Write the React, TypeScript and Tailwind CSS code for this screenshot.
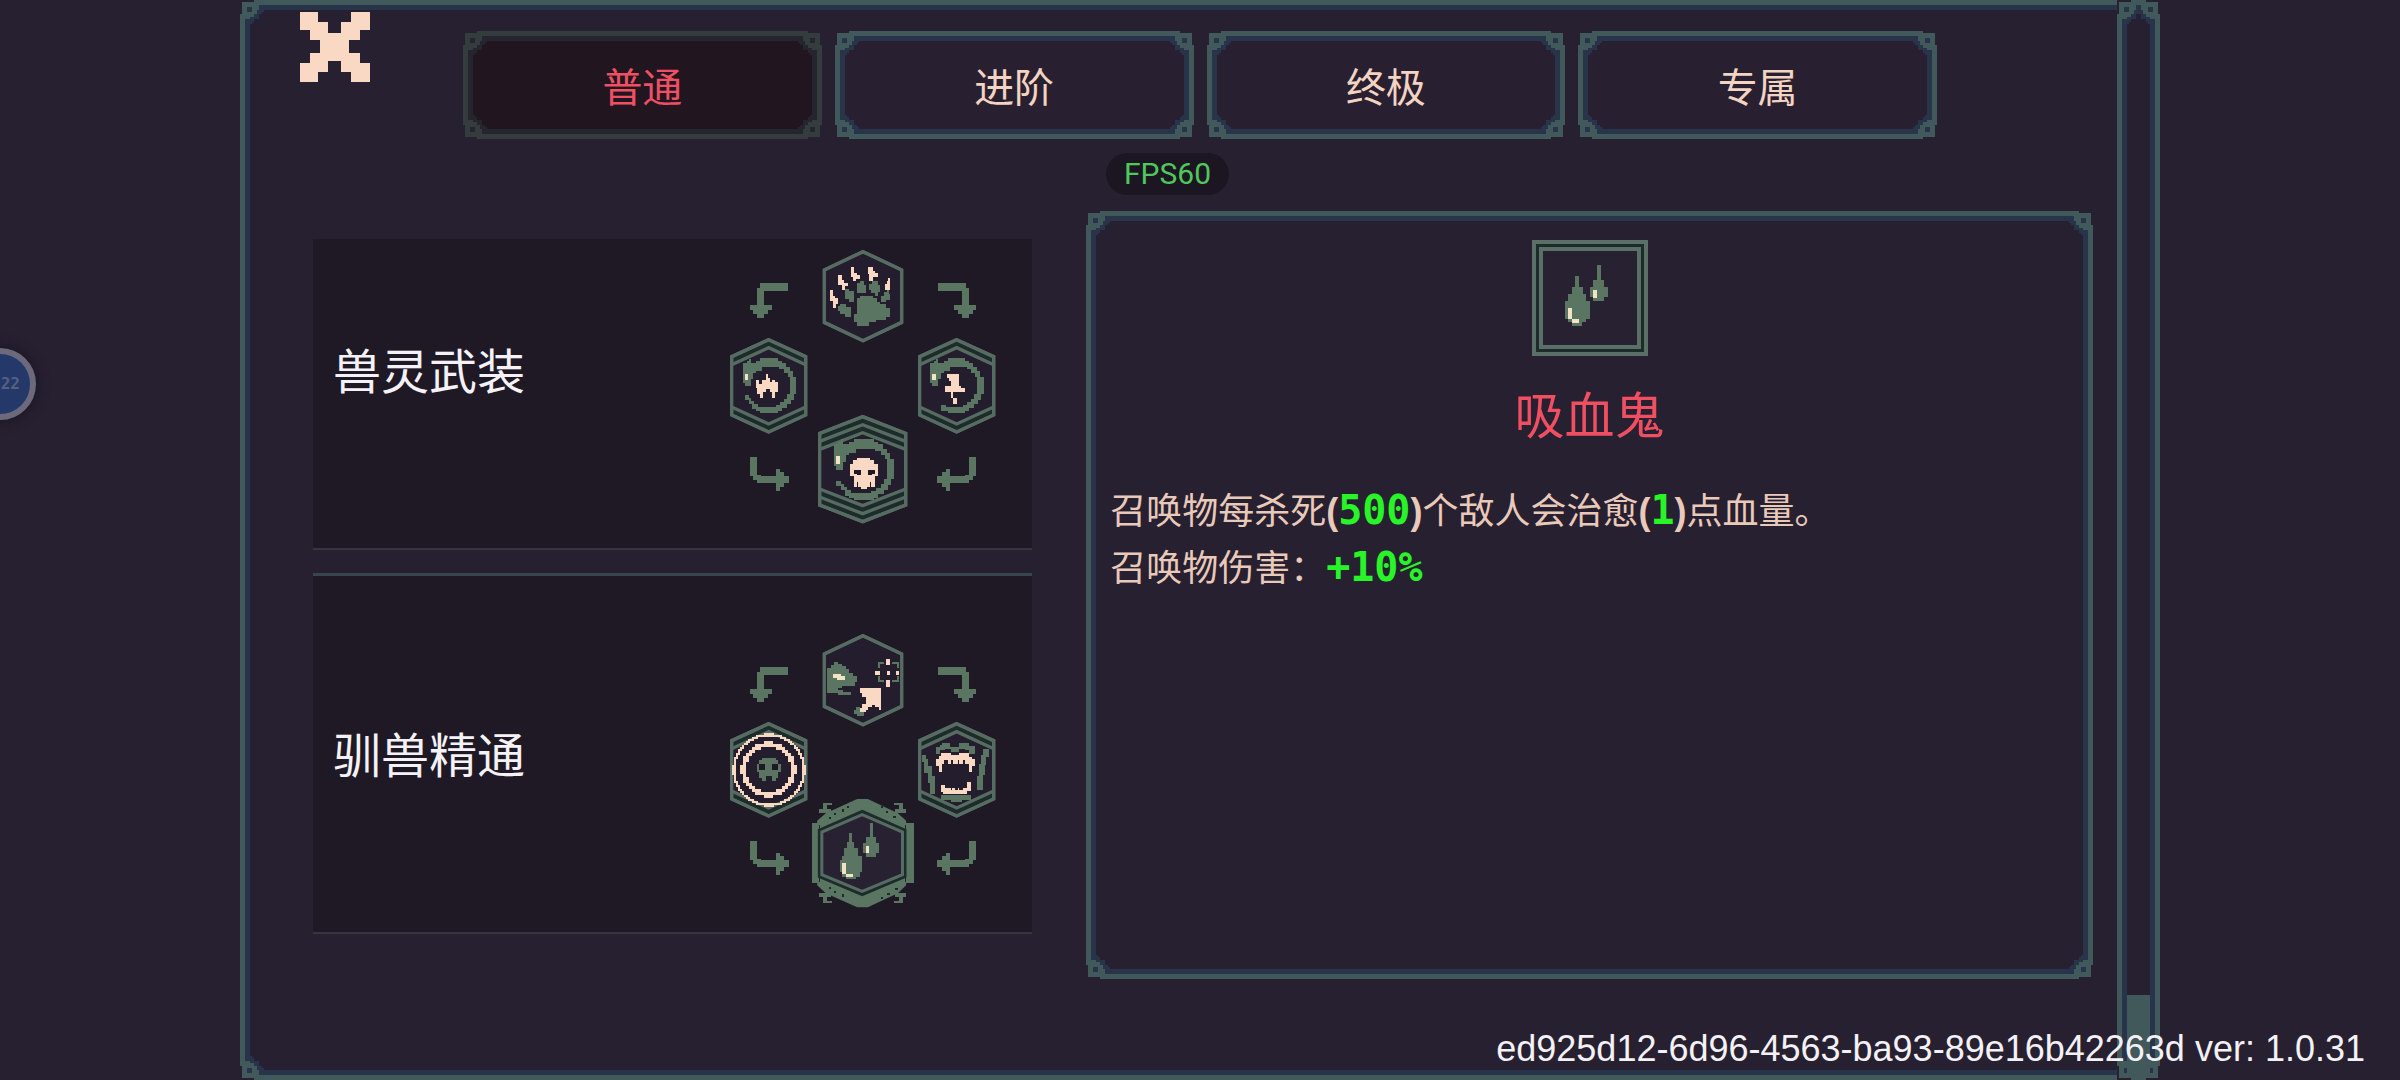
import { useState } from "react";
import type { ReactNode } from "react";

const GREEN = "#5a7561";
const EDGE = "#566b62";
const GROOVE = "#1d2b2b";
const PEACH = "#fad9c4";
const CREAM = "#f1e4c4";
const DARK = "#1f1926";

type Tone = { line: string; shade: string };
const NORMAL: Tone = { line: "#41595a", shade: "#28344a" };
const MUTED: Tone = { line: "#343c3d", shade: "#24252f" };

const CORNER_SPOTS = [
  "left-0 top-0",
  "right-0 top-0 -scale-x-100",
  "left-0 bottom-0 -scale-y-100",
  "right-0 bottom-0 -scale-100",
];

function Corner({ tone, spot }: { tone: Tone; spot: string }) {
  return (
    <svg className={`absolute h-6 w-6 ${spot}`} viewBox="0 0 10 10" shapeRendering="crispEdges" aria-hidden="true">
      <path fill="#272030" d="M0 0H6V1H1V6H0Z" />
      <path fill={tone.shade} d="M7 2H10V5H9V6H8V8H6V9H5V10H2V7Z" />
      <path fill={tone.line} d="M6 0H10V2H8V4H7V6H6V7H4V8H2V10H0V6H1V1H6Z" />
      <path fill={tone.shade} d="M3 3H5V5H3Z" />
    </svg>
  );
}

/* Decorative double border with riveted corners, laid over its parent. */
function Trim({ tone = NORMAL }: { tone?: Tone }) {
  const muted = tone === MUTED;
  return (
    <div aria-hidden="true" className="pointer-events-none absolute inset-0">
      <div className={`absolute inset-0 border-[5px] ${muted ? "border-[#343c3d]" : "border-[#41595a]"}`}>
        <div className={`h-full w-full border-[5px] ${muted ? "border-[#24252f]" : "border-[#28344a]"}`} />
      </div>
      {CORNER_SPOTS.map((s) => (
        <Corner key={s} tone={tone} spot={s} />
      ))}
    </div>
  );
}

/* ---------- hexagon outlines ---------- */

function Hex({ x, y, w, h, shoulder, ridges }: { x: number; y: number; w: number; h: number; shoulder: number; ridges: number }) {
  const l = x + 5;
  const r = x + w - 5;
  const c = x + w / 2;
  const t = y + 5;
  const b = y + h - 5;
  const top = y + shoulder;
  const bot = y + h - shoulder;
  const depth = ridges * 24;
  const steps = Array.from({ length: ridges }, (_, i) => (i + 1) * 24);
  return (
    <g strokeWidth="10" stroke={EDGE} fill="none">
      <path fill={ridges ? GROOVE : "#241d2d"} d={`M${c} ${t}L${r} ${top}V${bot}L${c} ${b}L${l} ${bot}V${top}Z`} />
      {ridges > 0 && (
        <path
          stroke="none"
          fill="#241d2d"
          d={`M${c} ${t + depth}L${r} ${top + depth}V${bot - depth}L${c} ${b - depth}L${l} ${bot - depth}V${top + depth}Z`}
        />
      )}
      {steps.map((d) => (
        <path key={d} d={`M${l} ${top + d}L${c} ${t + d}L${r} ${top + d}M${l} ${bot - d}L${c} ${b - d}L${r} ${bot - d}`} />
      ))}
      <path d={`M${c} ${t}L${r} ${top}V${bot}L${c} ${b}L${l} ${bot}V${top}Z`} />
    </g>
  );
}

/* Cells of a blocky circle outline. */
function ring(cx: number, cy: number, inner: number, outer: number, cell: number) {
  const n = Math.ceil(outer / cell) + 1;
  let d = "";
  for (let i = -n; i <= n; i++) {
    for (let j = -n; j <= n; j++) {
      const dist = Math.hypot(i * cell, j * cell);
      if (dist >= inner && dist < outer) {
        d += `M${cx + i * cell - cell / 2} ${cy + j * cell - cell / 2}h${cell}v${cell}h${-cell}z`;
      }
    }
  }
  return d;
}

const SERPENT =
  "M126 400H138V394H144V388H150V400H167V394H179V386H232V394H244V400H256V412H268V424H276V441H287V493H279V510H270V522H258V534H244V543H232V549H179V543H167V537H155V522H144V512H132V497H144V505H152V513H161V522H173V531H226V525H238V516H250V507H258V493H268V441H261V430H250V418H236V412H185V424H167V430H158V447H150V468H132V459H126Z";
const SERPENT_SHORT =
  "M126 400H138V394H144V388H150V400H167V394H179V386H232V394H244V400H256V412H268V424H276V441H287V493H279V510H270V522H258V534H244V543H232V549H179V543H159V525H173V531H226V525H238V516H250V507H258V493H268V441H261V430H250V418H236V412H185V424H167V430H158V447H150V468H132V459H126Z";

function Serpent({ d = SERPENT }: { d?: string }) {
  return (
    <>
      <path fill={GREEN} d={d} />
      <path fill={CREAM} d="M132 432h11v20h-11z" />
    </>
  );
}

function Art({ box, className, children }: { box: string; className: string; children: ReactNode }) {
  return (
    <svg viewBox={box} className={className} aria-hidden="true">
      {children}
    </svg>
  );
}

const Crisp = ({ children, transform }: { children: ReactNode; transform?: string }) => (
  <g shapeRendering="crispEdges" transform={transform}>
    {children}
  </g>
);

/* ---------- skill icons ---------- */

function Paw() {
  return (
    <Art box="365 60 243 279" className="h-[93px] w-[81px]">
      <Hex x={365} y={60} w={243} h={277} shoulder={60} ridges={0} />
      <Crisp>
        <path
          fill={PEACH}
          d="M388 181H396V197H402V205H412V222H405V235H396V214H388ZM412 134H424V150H430V160H440V168H432V180H424V165H412ZM450 110H460V128H468V134H477V146H465V152H455V142H450ZM502 110H515V124H521V130H531V140H515V152H504ZM561 145H568V180H551V163H557V152H561Z"
        />
        <path
          fill={GREEN}
          d="M418 222H435V230H449V262H432V252H418V244H412V228H418ZM432 176H445V184H460V217H444V206H432ZM468 158H478V152H490V164H495V188H468ZM504 163H514V152H531V164H538V186H532V198H521V188H510V180H504ZM549 187H557V180H565V192H568V210H556V217H540V199H549ZM478 199H515V205H527V217H538V223H556V234H568V262H556V271H525V277H503V289H467V277H460V252H467V205H478Z"
        />
      </Crisp>
    </Art>
  );
}

function SerpentClaw() {
  return (
    <Art box="88 325 234 288" className="h-24 w-[78px]">
      <Hex x={88} y={325} w={232} h={287} shoulder={56} ridges={1} />
      <Crisp>
        <Serpent />
        <path
          fill={PEACH}
          d="M167 452H175V464H185V452H196V434H203V446H208V458H214V452H223V458H233V487H223V504H215V487H208V478H197V487H187V504H179V493H168Z"
        />
      </Crisp>
    </Art>
  );
}

function SerpentBolt() {
  return (
    <Art box="649 325 234 288" className="h-24 w-[78px]">
      <Hex x={649} y={325} w={232} h={287} shoulder={56} ridges={1} />
      <Crisp transform="translate(559 0)">
        <Serpent d={SERPENT_SHORT} />
      </Crisp>
      <Crisp>
        <path fill={PEACH} d="M736 433H773V469H779V475H791V487H755V505H766V522H755V505H749V487H730V470H749V455H742V444H736Z" />
      </Crisp>
    </Art>
  );
}

function SerpentSkull() {
  return (
    <Art box="349 555 270 327" className="h-[109px] w-[90px]">
      <Hex x={349} y={555} w={268} h={325} shoulder={55} ridges={2} />
      <Crisp transform="translate(254 190) scale(1.13)">
        <Serpent />
      </Crisp>
      <Crisp>
        <path
          fill={PEACH}
          d="M467 684H505V691H516V703H528V738H519V770H508V755H505V770H496V778H478V770H469V755H466V770H457V738H444V703H455V691H467Z"
        />
        <path fill={DARK} d="M457 719H478V736H466V731H457ZM519 719H498V736H510V731H519Z" />
      </Crisp>
    </Art>
  );
}

function Hound() {
  return (
    <Art box="365 72 243 279" className="h-[93px] w-[81px]">
      <Hex x={365} y={72} w={243} h={277} shoulder={60} ridges={0} />
      <Crisp>
        <path
          fill={GREEN}
          d="M390 165H400V156H412V162H424V168H436V178H443V190H457V197H467V217H461V228H424V235H412V240H425V246H449V254H412V250H377V175H390ZM532 157H549V163H538V175H532ZM574 157H593V175H587V163H574ZM532 198H538V211H549V217H532ZM587 198H593V217H574V211H587ZM466 290H478V307H490V318H468V312H460V300H466Z"
        />
        <path fill={CREAM} d="M395 192H419V198H431V211H407V203H395Z" />
        <path
          fill={PEACH}
          d="M556 146h12v20h-12zM556 210h12v20h-12zM521 182h17v12h-17zM585 182h9v12h-9zM557 182h11v12h-11zM478 235H540V300H533V290H521V284H513V292H502V300H495V307H478V295H484V283H495V260H484V248H478Z"
        />
      </Crisp>
    </Art>
  );
}

function Target() {
  return (
    <Art box="88 337 234 288" className="h-24 w-[78px]">
      <Hex x={88} y={337} w={232} h={287} shoulder={56} ridges={1} />
      <circle cx="204" cy="480" r="102" fill="#241d2d" />
      <Crisp>
        <path fill={PEACH} d={ring(204, 480, 102, 109, 6)} />
        <path fill={PEACH} d={ring(204, 480, 66, 82, 9)} />
        <path
          fill={GREEN}
          d="M185 446H225V452H232V464H240V487H232V504H226V515H214V499H196V515H185V504H175V487H168V464H175V452H185Z"
        />
        <path fill={DARK} d="M175 464h18v17h-18zM215 464h18v17h-18z" />
      </Crisp>
    </Art>
  );
}

function Maw() {
  return (
    <Art box="649 337 234 288" className="h-24 w-[78px]">
      <Hex x={649} y={337} w={232} h={287} shoulder={56} ridges={1} />
      <Crisp>
        <path
          fill={GREEN}
          d="M661 435H672V447H678V470H690V498H700V552H684V520H678V490H667V458H661ZM845 417H862V442H853V465H850V495H844V542H827V498H833V463H838V435H845ZM702 411H714V405H722V399H745V411H773V399H803V408H820V432H803V420H790V417H773V426H748V417H730V422H714V432H702ZM719 555H808V570H780V578H748V570H719Z"
        />
        <path
          fill={PEACH}
          d="M719 440V429H748V437H773V429H803V441H812V447H820V470H810V488H801V464H791V452H783V462H773V452H768V462H755V452H748V462H738V452H726V464H720V488H711V470H702V447H711V440ZM719 525H730V535H748V541H752V535H760V541H768V535H773V541H785V535H797V517H808V543H797V553H725V546H719Z"
        />
      </Crisp>
    </Art>
  );
}

function BloodSelected() {
  return (
    <Art box="333 567 309 327" className="h-[109px] w-[103px]">
      <path fill={GREEN} d="M470 567H502L592 610L617 632V826L592 850L502 892H470L376 850L350 826V632L376 610Z" />
      <Crisp>
        <path
          fill={GREEN}
          d="M333 640H352V820H333ZM617 640H640V820H617ZM366 579H395V586H378V598H390V610H355V598H366ZM606 579H579V586H595V598H584V610H617V598H606ZM366 880H395V873H378V861H390V849H355V861H366ZM606 880H579V873H595V861H584V849H617V861H606Z"
        />
        <path
          fill={GROOVE}
          d="M612 645h5v170h-5zM355 645h4v170h-4zM400 610h7v6h-7zM424 598h6v8h-6zM384 622h8v6h-8zM440 588h6v6h-6zM540 588h6v6h-6zM556 604h7v6h-7zM578 618h7v6h-7zM400 842h7v6h-7zM424 852h6v8h-6zM384 832h8v6h-8zM540 862h6v6h-6zM560 848h7v6h-7zM584 834h7v6h-7z"
        />
      </Crisp>
      <path fill="#282131" stroke={GROOVE} strokeWidth="20" d="M485 610L608 664V796L485 848L362 796V664Z" />
      <path fill="#282131" stroke={EDGE} strokeWidth="9" d="M485 614L606 666V794L485 844L364 794V666Z" />
      <Crisp>
        <path
          fill={GREEN}
          d="M445 669H455V697H461V715H473V738H484V787H478V800H467V808H437V800H425V787H417V750H425V738H431V715H438V697H445ZM507 640H517V680H527V698H536V728H527V740H496V728H487V698H496V680H507Z"
        />
        <path fill={CREAM} d="M424 758h11v33h-11zM435 791h21v10h-21zM495 708h11v21h-11z" />
      </Crisp>
    </Art>
  );
}

function BloodLarge() {
  return (
    <Art box="93 60 348 348" className="h-[116px] w-[116px] shrink-0">
      <Crisp>
        <path fill="#5a6f65" d="M93 60H441V408H93Z" />
        <path fill={GROOVE} d="M105 72H429V396H105Z" />
        <path fill="#5a6f65" d="M114 81H420V387H114Z" />
        <path fill="#282131" d="M126 93H408V375H126Z" />
        <path
          fill={GREEN}
          d="M223 168H234V200H245V222H255V243H267V297H255V307H244V318H212V307H202V297H191V243H202V222H212V200H223ZM288 136H299V179H310V200H320V232H310V243H277V232H266V200H277V179H288Z"
        />
        <path fill={CREAM} d="M201 264h12v33h-12zM212 297h23v11h-23zM276 210h12v24h-12z" />
      </Crisp>
    </Art>
  );
}

function ArrowDown({ flip = false }: { flip?: boolean }) {
  return (
    <Art box="147 158 117 105" className={flip ? "h-[35px] w-[39px] -scale-x-100" : "h-[35px] w-[39px]"}>
      <Crisp>
        <path fill={GREEN} d="M262 158V181H190V225H212V238H200V250H190V262H167V250H155V238H147V225H167V172H178V158Z" />
      </Crisp>
    </Art>
  );
}

function ArrowSide({ flip = false }: { flip?: boolean }) {
  return (
    <Art box="147 685 117 102" className={flip ? "h-[34px] w-[39px] -scale-x-100" : "h-[34px] w-[39px]"}>
      <Crisp>
        <path fill={GREEN} d="M147 685H168V738H179V743H226V720H238V731H250V742H263V762H250V775H238V787H226V764H167V755H155V743H147Z" />
      </Crisp>
    </Art>
  );
}

/* ---------- page parts ---------- */

type Skill = { label: string; icon: ReactNode };

function SkillDiagram({ top, left, right, bottom }: { top: Skill; left: Skill; right: Skill; bottom: Skill }) {
  return (
    <div className="relative h-[274px] w-[266px] shrink-0">
      <button aria-label={top.label} className="absolute left-1/2 top-0 -translate-x-1/2">{top.icon}</button>
      <button aria-label={left.label} className="absolute left-0 top-[88px]">{left.icon}</button>
      <button aria-label={right.label} className="absolute right-0 top-[88px]">{right.icon}</button>
      <button aria-label={bottom.label} className="absolute bottom-0 left-1/2 -translate-x-1/2">{bottom.icon}</button>
      <div className="absolute left-5 top-[33px]"><ArrowDown /></div>
      <div className="absolute right-5 top-[33px]"><ArrowDown flip /></div>
      <div className="absolute left-5 top-[207px]"><ArrowSide /></div>
      <div className="absolute right-5 top-[207px]"><ArrowSide flip /></div>
    </div>
  );
}

function SkillRow({ name, children }: { name: string; children: ReactNode }) {
  return (
    <li className="flex h-[361px] items-center justify-between border-b-2 border-t-[3px] border-b-[#38343f] border-t-[#36454e] bg-[#1f1926] pl-5 pr-9">
      <h2 className="pb-1 text-5xl text-[#f4f2f6]">{name}</h2>
      <div className="pt-[34px]">{children}</div>
    </li>
  );
}

function Num({ children }: { children: ReactNode }) {
  return <span className="font-['DejaVu_Sans_Mono',monospace] text-[40px] font-bold leading-none text-[#27f527]">{children}</span>;
}

function Paren({ children }: { children: ReactNode }) {
  return <span className="font-['Liberation_Sans',sans-serif] text-4xl font-bold leading-none">{children}</span>;
}

const TABS = ["普通", "进阶", "终极", "专属"];

export default function App() {
  const [tab, setTab] = useState(0);
  return (
    <div className="relative min-h-screen overflow-hidden bg-[#272030] font-['Noto_Sans_CJK_SC',sans-serif]">
      <main className="relative mx-auto flex min-h-screen w-4/5">
        <Trim />
        <div className="flex min-w-0 flex-1 flex-col">
          <header className="flex items-start pl-[60px]">
            <button aria-label="关闭" className="relative mt-3 shrink-0">
              <svg viewBox="0 0 70 70" className="h-[70px] w-[70px]" shapeRendering="crispEdges" aria-hidden="true">
                <path
                  fill={PEACH}
                  d="M0 0H18V10H28V21H41V10H51V0H70V18H60V28H49V41H60V51H70V70H51V60H41V49H28V60H18V70H0V51H10V41H20V28H10V18H0Z"
                />
              </svg>
            </button>
            <nav className="ml-[93px] mr-[180px] mt-[31px] grid flex-1 grid-cols-4 gap-[13px]">
              {TABS.map((t, i) => (
                <button
                  key={t}
                  aria-pressed={i === tab}
                  onClick={() => setTab(i)}
                  className={`relative h-[108px] text-[40px] leading-none ${
                    i === tab ? "bg-[#211520] text-[#ee5064]" : "bg-[#282031] text-[#f3d3c1]"
                  }`}
                >
                  <Trim tone={i === tab ? MUTED : NORMAL} />
                  <span className="relative">{t}</span>
                </button>
              ))}
            </nav>
          </header>

          <div className="mb-[101px] ml-[73px] mr-6 mt-[72px] grid flex-1 grid-cols-[5fr_7fr] gap-[54px]">
            <div className="mt-7 min-w-0 self-start overflow-hidden">
              <ul className="-mt-[50px] flex flex-col gap-[23px]">
                <SkillRow name="兽灵武装">
                  <SkillDiagram
                    top={{ label: "兽爪", icon: <Paw /> }}
                    left={{ label: "灵爪", icon: <SerpentClaw /> }}
                    right={{ label: "灵刃", icon: <SerpentBolt /> }}
                    bottom={{ label: "灵骨", icon: <SerpentSkull /> }}
                  />
                </SkillRow>
                <SkillRow name="驯兽精通">
                  <SkillDiagram
                    top={{ label: "猎犬", icon: <Hound /> }}
                    left={{ label: "标靶", icon: <Target /> }}
                    right={{ label: "利齿", icon: <Maw /> }}
                    bottom={{ label: "吸血鬼", icon: <BloodSelected /> }}
                  />
                </SkillRow>
              </ul>
            </div>

            <section className="relative flex min-w-0 flex-col items-center px-6 pt-[29px]">
              <Trim />
              <BloodLarge />
              <h1 className="mt-6 text-[50px] leading-[64px] text-[#f04f62]">吸血鬼</h1>
              <div className="mt-9 self-stretch text-4xl leading-[57px] text-[#e9c9b9]">
                <p>
                  召唤物每杀死<Paren>(</Paren><Num>500</Num><Paren>)</Paren>个敌人会治愈<Paren>(</Paren><Num>1</Num><Paren>)</Paren>点血量。
                </p>
                <p>
                  召唤物伤害：<Num>+10%</Num>
                </p>
              </div>
            </section>
          </div>
        </div>

        <div className="relative flex w-[43px] shrink-0 flex-col justify-end px-[10px] pb-1">
          <Trim />
          <div className="relative h-[81px] bg-[#41595a]" />
        </div>
      </main>

      <div className="absolute left-[1106px] top-[153px] rounded-full bg-[#1c1622] px-[18px] font-['Roboto',sans-serif] text-[30px] leading-[42px] text-[#4fc75c]">
        FPS60
      </div>

      <div className="absolute -left-9 top-[348px] flex h-[72px] w-[72px] items-center justify-end rounded-full border-[6px] border-[#6c697c] bg-[#24396a] pr-2.5 font-['DejaVu_Sans_Mono',monospace] text-base font-bold text-[#56607f] shadow-[0_0_10px_4px_#1f1926]">
        22
      </div>

      <p className="absolute bottom-[11px] right-[35px] font-['Liberation_Sans',sans-serif] text-4xl text-[#f3f1f5]">
        ed925d12-6d96-4563-ba93-89e16b42263d ver: 1.0.31
      </p>
    </div>
  );
}
